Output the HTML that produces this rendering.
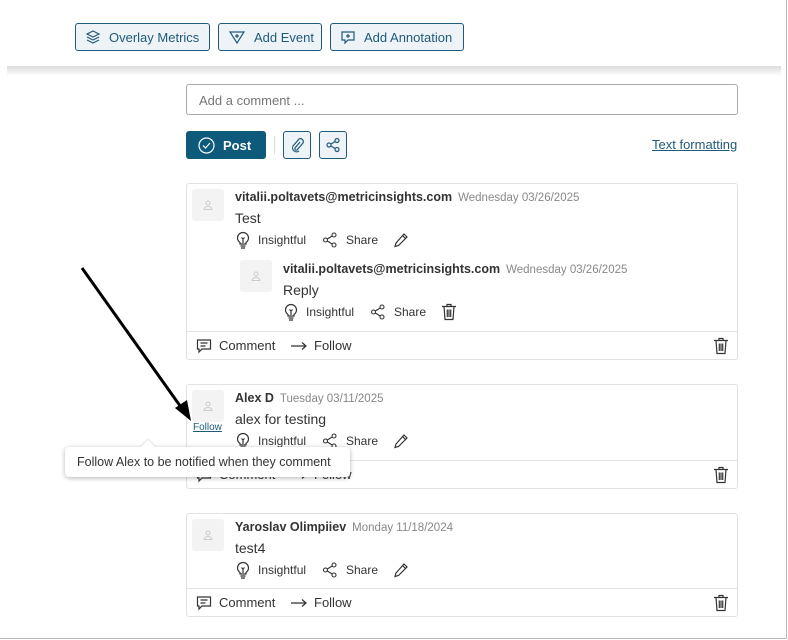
<!DOCTYPE html>
<html><head><style>
*{box-sizing:border-box;margin:0;padding:0}
body{width:788px;height:640px;background:#fff;font-family:"Liberation Sans",sans-serif;position:relative;overflow:hidden;color:#222}
.frame{position:absolute;left:0;top:0;width:787px;height:639px;border-right:1px solid #bbb;border-bottom:1px solid #bbb}
.ab{position:absolute}
.btn{position:absolute;top:23px;height:28px;border:1px solid #1f5a7a;border-radius:3px;background:#eef3f7;color:#1f5a7a;font-size:13px;display:flex;align-items:center;padding-left:9px;gap:8px}
.shadow{position:absolute;left:7px;top:66px;width:774px;height:10px;background:linear-gradient(#dcdcdc,#fff)}
.card{position:absolute;left:186px;width:552px;border:1px solid #e2e2e2;border-radius:3px;background:#fff}
.av{position:absolute;width:32px;height:32px;background:#f3f3f3;border-radius:3px;display:flex;align-items:center;justify-content:center}
.nm{position:absolute;font-size:12.5px;font-weight:bold;color:#333}
.nm span{font-weight:normal;color:#888;font-size:11.5px;margin-left:6px}
.tx{position:absolute;font-size:14px;color:#333}
.act{position:absolute;font-size:12px;color:#333;height:18px;width:200px}
.act>*{position:absolute;top:0}
.act span{top:2px}
.foot{position:absolute;left:0;right:0;bottom:0;height:28px;border-top:1px solid #e2e2e2;font-size:13px;color:#333}
svg{display:block}
</style></head><body>
<svg width="0" height="0" style="position:absolute">
<defs>
<symbol id="bulb" viewBox="0 0 16 18"><g fill="none" stroke="#333" stroke-width="1.2"><path d="M5 11.5C3 10 2.5 8.5 2.5 7a5.5 5.5 0 0 1 11 0c0 1.5-.5 3-2.5 4.5v1.5H5Z"/><path d="M5.5 15h5M6 17h4M8 12V8l-1.5-1.5M8 8l1.5-1.5"/></g></symbol>
<symbol id="share" viewBox="0 0 16 16"><g fill="none" stroke="#333" stroke-width="1.1"><circle cx="12" cy="3" r="2"/><circle cx="3.5" cy="8" r="2"/><circle cx="12" cy="13" r="2"/><path d="M5.3 7l4.9-3M5.3 9l4.9 3"/></g></symbol>
<symbol id="pen" viewBox="0 0 16 16"><g fill="none" stroke="#333" stroke-width="1.2"><path d="M11 2l3 3-8.5 8.5L2 14.5l1-3.5Z"/><path d="M9.5 3.5l3 3"/></g></symbol>
<symbol id="trash" viewBox="0 0 16 18"><g fill="none" stroke="#333" stroke-width="1.2"><path d="M1 3.5h14M6 3.5V1.5h4v2M3 3.5l1 13h8l1-13M6.3 6.5v7.5M8 6.5v7.5M9.7 6.5v7.5"/></g></symbol>
<symbol id="cmt" viewBox="0 0 16 16"><g fill="none" stroke="#333" stroke-width="1.2"><path d="M1.5 2h13v9H6l-3 3v-3H1.5Z"/><path d="M4.5 5h7M4.5 8h5"/></g></symbol>
<symbol id="arr" viewBox="0 0 18 10"><g fill="none" stroke="#333" stroke-width="1.2"><path d="M1 5h15M12 1.5l4 3.5-4 3.5"/></g></symbol>
<symbol id="usr" viewBox="0 0 10 10"><g fill="none" stroke="#ccc"><circle cx="5" cy="3" r="2"/><path d="M1 9.5h8c0-2-2-3-4-3s-4 1-4 3Z"/></g></symbol>
</defs></svg>
<div class="frame"></div>
<div class="btn" style="left:75px;width:135px"><svg width="16" height="16" viewBox="0 0 16 16" fill="none" stroke="#1f5a7a" stroke-width="1.2"><path d="M8 2L14 5 8 8 2 5Z"/><path d="M2 8l6 3 6-3"/><path d="M2 11l6 3 6-3"/></svg>Overlay Metrics</div>
<div class="btn" style="left:218px;width:104px"><svg width="18" height="16" viewBox="0 0 18 16" fill="none" stroke="#1f5a7a" stroke-width="1.2"><path d="M2 3h14L9 14Z"/><path d="M9 5v4M7 7h4"/></svg>Add Event</div>
<div class="btn" style="left:330px;width:134px"><svg width="16" height="16" viewBox="0 0 16 16" fill="none" stroke="#1f5a7a" stroke-width="1.2"><path d="M2 3h12v8H8l-3 3v-3H2Z"/><path d="M8 5v4M6 7h4"/></svg>Add Annotation</div>
<div class="shadow"></div>
<div class="ab" style="left:186px;top:84px;width:552px;height:31px;border:1px solid #aaa;border-radius:3px;font-size:13px;color:#777;padding:8px 12px">Add a comment ...</div>
<div class="ab" style="left:186px;top:131px;width:80px;height:28px;background:#0d5a7a;border-radius:3px;color:#fff;font-size:13px;font-weight:bold;display:flex;align-items:center;padding-left:12px;gap:8px"><svg width="17" height="17" viewBox="0 0 17 17" fill="none" stroke="#fff" stroke-width="1.2"><circle cx="8.5" cy="8.5" r="7.5"/><path d="M5 8.5l2.5 2.5 4.5-5"/></svg>Post</div>
<div class="ab" style="left:274px;top:136px;width:1px;height:18px;background:#ddd"></div>
<div class="ab" style="left:283px;top:131px;width:28px;height:28px;border:1px solid #1f5a7a;border-radius:3px;background:#eef3f7;display:flex;align-items:center;justify-content:center"><svg width="16" height="16" viewBox="0 0 16 16" fill="none" stroke="#1f5a7a" stroke-width="1.2"><path d="M11 5l-5 6a1.5 1.5 0 0 0 2 2l6-7a3 3 0 0 0-4-4L4 9a4 4 0 0 0 6 5"/></svg></div>
<div class="ab" style="left:319px;top:131px;width:28px;height:28px;border:1px solid #1f5a7a;border-radius:3px;background:#eef3f7;display:flex;align-items:center;justify-content:center"><svg width="16" height="16" viewBox="0 0 16 16" fill="none" stroke="#1f5a7a" stroke-width="1.2"><circle cx="12" cy="3.5" r="2"/><circle cx="4" cy="8" r="2"/><circle cx="12" cy="12.5" r="2"/><path d="M6 7l4-2.5M6 9l4 2.5"/></svg></div>
<div class="ab" style="left:652px;top:137px;font-size:13px;color:#1f5a7a;text-decoration:underline">Text formatting</div>

<!-- card 1 -->
<div class="card" style="top:183px;height:177px">
 <div class="av" style="left:5px;top:5px"><svg width="10" height="10"><use href="#usr"/></svg></div>
 <div class="nm" style="left:48px;top:6px">vitalii.poltavets@metricinsights.com<span>Wednesday 03/26/2025</span></div>
 <div class="tx" style="left:48px;top:26px">Test</div>
 <div class="act" style="left:48px;top:47px"><svg width="16" height="18" style="left:0"><use href="#bulb"/></svg><span style="left:23px">Insightful</span><svg width="16" height="16" style="left:87px;top:1px"><use href="#share"/></svg><span style="left:111px">Share</span><svg width="16" height="16" style="left:158px;top:1px"><use href="#pen"/></svg></div>
 <div class="av" style="left:53px;top:76px"><svg width="10" height="10"><use href="#usr"/></svg></div>
 <div class="nm" style="left:96px;top:78px">vitalii.poltavets@metricinsights.com<span>Wednesday 03/26/2025</span></div>
 <div class="tx" style="left:96px;top:98px">Reply</div>
 <div class="act" style="left:96px;top:119px"><svg width="16" height="18" style="left:0"><use href="#bulb"/></svg><span style="left:23px">Insightful</span><svg width="16" height="16" style="left:87px;top:1px"><use href="#share"/></svg><span style="left:111px">Share</span><svg width="16" height="18" style="left:158px"><use href="#trash"/></svg></div>
 <div class="foot"><svg class="ab" width="16" height="16" style="left:9px;top:6px"><use href="#cmt"/></svg><span class="ab" style="left:32px;top:6px">Comment</span><svg class="ab" width="18" height="10" style="left:103px;top:9px"><use href="#arr"/></svg><span class="ab" style="left:127px;top:6px">Follow</span><svg class="ab" width="16" height="18" style="right:8px;top:5px"><use href="#trash"/></svg></div>
</div>

<!-- card 2 -->
<div class="card" style="top:384px;height:105px">
 <div class="av" style="left:5px;top:5px"><svg width="10" height="10"><use href="#usr"/></svg></div>
 <div class="ab" style="left:6px;top:37px;font-size:10px;color:#1f5a7a;text-decoration:underline">Follow</div>
 <div class="nm" style="left:48px;top:6px">Alex D<span>Tuesday 03/11/2025</span></div>
 <div class="tx" style="left:48px;top:26px">alex for testing</div>
 <div class="act" style="left:48px;top:47px"><svg width="16" height="18" style="left:0"><use href="#bulb"/></svg><span style="left:23px">Insightful</span><svg width="16" height="16" style="left:87px;top:1px"><use href="#share"/></svg><span style="left:111px">Share</span><svg width="16" height="16" style="left:158px;top:1px"><use href="#pen"/></svg></div>
 <div class="foot"><svg class="ab" width="16" height="16" style="left:9px;top:6px"><use href="#cmt"/></svg><span class="ab" style="left:32px;top:6px">Comment</span><svg class="ab" width="18" height="10" style="left:103px;top:9px"><use href="#arr"/></svg><span class="ab" style="left:127px;top:6px">Follow</span><svg class="ab" width="16" height="18" style="right:8px;top:5px"><use href="#trash"/></svg></div>
</div>

<!-- card 3 -->
<div class="card" style="top:513px;height:104px">
 <div class="av" style="left:5px;top:5px"><svg width="10" height="10"><use href="#usr"/></svg></div>
 <div class="nm" style="left:48px;top:6px">Yaroslav Olimpiiev<span>Monday 11/18/2024</span></div>
 <div class="tx" style="left:48px;top:26px">test4</div>
 <div class="act" style="left:48px;top:47px"><svg width="16" height="18" style="left:0"><use href="#bulb"/></svg><span style="left:23px">Insightful</span><svg width="16" height="16" style="left:87px;top:1px"><use href="#share"/></svg><span style="left:111px">Share</span><svg width="16" height="16" style="left:158px;top:1px"><use href="#pen"/></svg></div>
 <div class="foot"><svg class="ab" width="16" height="16" style="left:9px;top:6px"><use href="#cmt"/></svg><span class="ab" style="left:32px;top:6px">Comment</span><svg class="ab" width="18" height="10" style="left:103px;top:9px"><use href="#arr"/></svg><span class="ab" style="left:127px;top:6px">Follow</span><svg class="ab" width="16" height="18" style="right:8px;top:5px"><use href="#trash"/></svg></div>
</div>

<!-- tooltip -->
<div class="ab" style="left:65px;top:447px;width:285px;height:30px;background:#fff;border-radius:4px;box-shadow:0 1px 5px rgba(0,0,0,.3);font-size:12.5px;color:#333;padding:8px 12px">Follow Alex to be notified when they comment</div>
<div class="ab" style="left:143px;top:442px;width:10px;height:10px;background:#fff;transform:rotate(45deg);box-shadow:-1px -1px 2px rgba(0,0,0,.1)"></div>

<svg class="ab" style="left:0;top:0" width="788" height="640"><path d="M82 268L183 410" stroke="#000" stroke-width="3"/><path d="M191 421L175 408 187 400Z" fill="#000"/></svg>
</body></html>
